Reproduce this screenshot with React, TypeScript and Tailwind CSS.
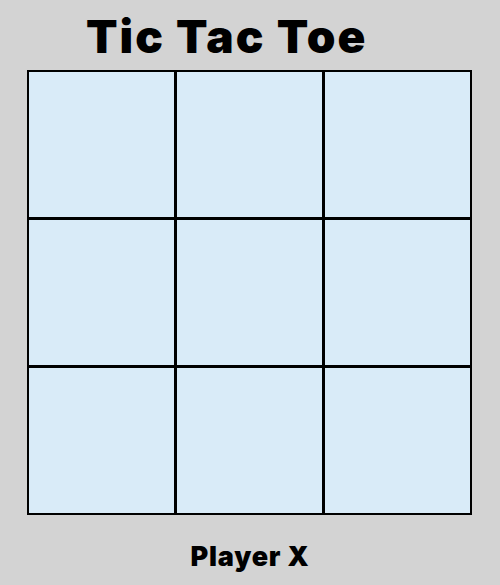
export default function App() {
  const cells = Array.from({ length: 9 });
  return (
    <div className="w-[500px] h-[585px] bg-[#d3d3d3] flex flex-col" style={{ fontFamily: "Inter, 'Liberation Sans', sans-serif" }}>
      <h1 className="pl-[86px] pt-[10px] h-[70px] text-[46px] leading-[52px] font-black text-black tracking-[2px]">
        Tic Tac Toe
      </h1>
      <div className="ml-[27px] w-fit grid grid-cols-[repeat(3,145px)] grid-rows-[repeat(3,145px)] gap-[3px] p-[2px] bg-black">
        {cells.map((_, i) => (
          <div key={i} className="bg-[#d9ebf8]" />
        ))}
      </div>
      <div className="mt-[26px] text-center text-[27px] leading-[32px] font-black text-black tracking-[0.8px]">Player X</div>
    </div>
  );
}
